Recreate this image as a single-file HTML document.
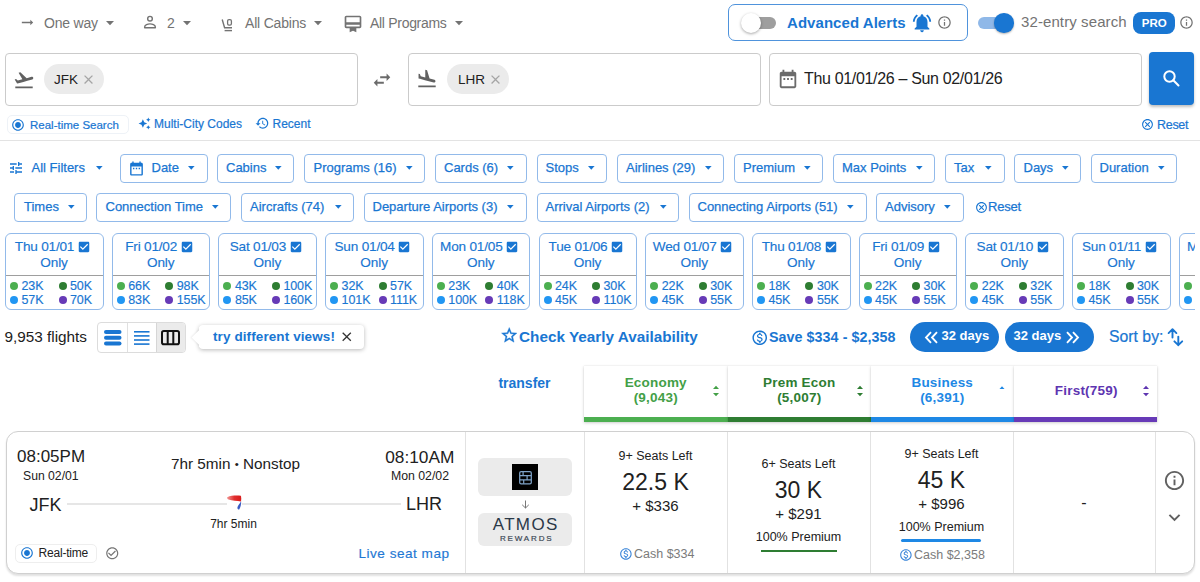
<!DOCTYPE html>
<html><head><meta charset="utf-8"><style>
html,body{margin:0;padding:0;background:#fff;width:1200px;height:582px;overflow:hidden;position:relative;}
body{font-family:"Liberation Sans",sans-serif;}
.t{position:absolute;white-space:nowrap;}
.b{position:absolute;}
.i{position:absolute;display:block;overflow:visible;}
</style></head><body>
<svg class="i" style="left:19px;top:14px;" width="17" height="17" viewBox="0 0 24 24"><path d="M16.01 11H4v2h12.01v3L20 12l-3.99-4z" fill="#737373"/></svg>
<div class="t" style="top:13.55px;font-size:14px;line-height:18px;font-weight:400;color:#737373;letter-spacing:-0.2px;left:44px;">One way</div>
<svg class="i" style="left:105.5px;top:21.2px;" width="8" height="4.2" viewBox="0 0 8 4.2"><path d="M0 0H8L4.0 4.2Z" fill="#737373"/></svg>
<svg class="i" style="left:141px;top:13px;" width="18" height="18" viewBox="0 0 24 24"><circle cx="12" cy="7.6" r="3.1" fill="none" stroke="#737373" stroke-width="1.9"/><path d="M4.9 19.6v-1.1c0-2.6 4.2-4 7.1-4s7.1 1.4 7.1 4v1.1z" fill="none" stroke="#737373" stroke-width="1.9" stroke-linejoin="round"/></svg>
<div class="t" style="top:13.55px;font-size:14px;line-height:18px;font-weight:400;color:#737373;left:167px;">2</div>
<svg class="i" style="left:183px;top:21.2px;" width="8" height="4.2" viewBox="0 0 8 4.2"><path d="M0 0H8L4.0 4.2Z" fill="#737373"/></svg>
<svg class="i" style="left:221px;top:18px;" width="13" height="14" viewBox="0 0 13 14"><path d="M1.2 1.5 L3.6 9.8 H11" fill="none" stroke="#737373" stroke-width="1.4"/><path d="M3.6 12.6H11" stroke="#737373" stroke-width="1.4"/><rect x="6.6" y="1.6" width="3.8" height="5.6" rx="1.4" fill="none" stroke="#737373" stroke-width="1.3"/></svg>
<div class="t" style="top:13.55px;font-size:14px;line-height:18px;font-weight:400;color:#737373;letter-spacing:-0.2px;left:245px;">All Cabins</div>
<svg class="i" style="left:314px;top:21.2px;" width="8" height="4.2" viewBox="0 0 8 4.2"><path d="M0 0H8L4.0 4.2Z" fill="#737373"/></svg>
<svg class="i" style="left:343px;top:13.5px;" width="20" height="20" viewBox="0 0 24 24"><path d="M20 2H4c-1.11 0-2 .89-2 2v11c0 1.11.89 2 2 2h4v5l4-2 4 2v-5h4c1.11 0 2-.89 2-2V4c0-1.11-.89-2-2-2zm0 13H4v-2h16v2zm0-5H4V4h16v6z" fill="#737373"/></svg>
<div class="t" style="top:13.55px;font-size:14px;line-height:18px;font-weight:400;color:#737373;letter-spacing:-0.3px;left:370px;">All Programs</div>
<svg class="i" style="left:454.5px;top:21.2px;" width="8" height="4.2" viewBox="0 0 8 4.2"><path d="M0 0H8L4.0 4.2Z" fill="#737373"/></svg>
<div class="b" style="left:727.5px;top:4px;width:240px;height:37px;border:1px solid #4f93dc;border-radius:7px;box-sizing:border-box;"></div>
<div class="b" style="left:750px;top:16.5px;width:26px;height:12px;background:#9e9e9e;border-radius:6px;"></div>
<div class="b" style="left:741px;top:12.5px;width:20px;height:20px;background:#fff;border-radius:50%;box-shadow:0 1px 3px rgba(0,0,0,.35);"></div>
<div class="t" style="top:12.80px;font-size:15px;line-height:19px;font-weight:700;color:#1976d2;letter-spacing:0.05px;left:787px;">Advanced Alerts</div>
<svg class="i" style="left:910.5px;top:11.5px;" width="22" height="22" viewBox="0 0 24 24"><path d="M7.58 4.08L6.15 2.65C3.75 4.48 2.17 7.3 2.03 10.5h2c.15-2.65 1.51-4.97 3.55-6.42zm12.39 6.42h2c-.15-3.2-1.730-6.02-4.12-7.85l-1.42 1.43c2.02 1.45 3.39 3.77 3.54 6.42zM18 11c0-3.07-1.64-5.64-4.5-6.32V4c0-.83-.67-1.5-1.5-1.5s-1.5.67-1.5 1.5v.68C7.630 5.36 6 7.92 6 11v5l-2 2v1h16v-1l-2-2v-5zm-6 11c.14 0 .27-.01.4-.04.65-.14 1.18-.58 1.44-1.18.1-.24.15-.5.15-.78h-4c.01 1.1.9 2 2.01 2z" fill="#1976d2"/></svg>
<svg class="i" style="left:937px;top:15px;" width="15" height="15" viewBox="0 0 24 24"><path d="M11 7h2v2h-2zm0 4h2v6h-2zm1-9C6.48 2 2 6.48 2 12s4.48 10 10 10 10-4.48 10-10S17.52 2 12 2zm0 18c-4.41 0-8-3.59-8-8s3.59-8 8-8 8 3.59 8 8-3.59 8-8 8z" fill="#737373"/></svg>
<div class="b" style="left:978px;top:16.5px;width:23px;height:12px;background:#8fb8e8;border-radius:6px;"></div>
<div class="b" style="left:994px;top:13px;width:19.5px;height:19.5px;background:#1976d2;border-radius:50%;box-shadow:0 1px 2px rgba(0,0,0,.3);"></div>
<div class="t" style="top:12.30px;font-size:15px;line-height:19px;font-weight:400;color:#737373;letter-spacing:0.1px;left:1021px;">32-entry search</div>
<div class="b" style="left:1133px;top:11.5px;width:42px;height:22px;background:#1976d2;border-radius:8px;"></div>
<div class="t" style="top:16.02px;font-size:11.5px;line-height:14px;font-weight:700;color:#fff;left:1133.3px;width:42px;text-align:center;">PRO</div>
<svg class="i" style="left:1178.5px;top:15px;" width="15" height="15" viewBox="0 0 24 24"><path d="M11 7h2v2h-2zm0 4h2v6h-2zm1-9C6.48 2 2 6.48 2 12s4.48 10 10 10 10-4.48 10-10S17.52 2 12 2zm0 18c-4.41 0-8-3.59-8-8s3.59-8 8-8 8 3.59 8 8-3.59 8-8 8z" fill="#737373"/></svg>
<div class="b" style="left:5px;top:53px;width:352.5px;height:53px;border:1px solid #cbcbcb;border-radius:4px;box-sizing:border-box;"></div>
<svg class="i" style="left:13px;top:68.5px;" width="22" height="22" viewBox="0 0 24 24"><path d="M2.5 19h19v2h-19zm19.57-9.36c-.21-.8-1.04-1.28-1.84-1.06L14.92 10l-6.9-6.43-1.93.51 4.14 7.17-4.97 1.33-1.97-1.54-1.45.39 1.82 3.16.77 1.33 1.6-.43 5.31-1.42 4.35-1.16L21 11.49c.81-.23 1.28-1.05 1.070-1.85z" fill="#616161"/></svg>
<div class="b" style="left:44px;top:64.3px;width:60px;height:30px;background:#ebebeb;border-radius:15px;"></div>
<div class="t" style="top:70.62px;font-size:13.5px;line-height:17px;font-weight:400;color:#212121;left:54px;">JFK</div>
<svg class="i" style="left:81px;top:71.5px;" width="15" height="15" viewBox="0 0 24 24"><path d="M19 6.41L17.59 5 12 10.59 6.41 5 5 6.41 10.59 12 5 17.59 6.41 19 12 13.41 17.59 19 19 17.59 13.41 12z" fill="#a5a5a5"/></svg>
<svg class="i" style="left:371px;top:68.5px;" width="22" height="22" viewBox="0 0 24 24"><path d="M6.99 11L3 15l3.99 4v-3H14v-2H6.99v-3zM21 9l-3.99-4v3H10v2h7.01v3L21 9z" fill="#6b6b6b"/></svg>
<div class="b" style="left:408px;top:53px;width:353px;height:53px;border:1px solid #cbcbcb;border-radius:4px;box-sizing:border-box;"></div>
<svg class="i" style="left:416px;top:68px;" width="22" height="22" viewBox="0 0 24 24"><path d="M2.5 19h19v2h-19zm7.18-5.73l4.35 1.16 5.31 1.42c.8.21 1.62-.26 1.84-1.06.21-.8-.26-1.62-1.06-1.84l-5.31-1.42-2.76-9.02L10.12 2v8.28L5.15 8.95l-.93-2.32-1.45-.39v5.17l1.6.43 5.31 1.43z" fill="#616161"/></svg>
<div class="b" style="left:447px;top:64.3px;width:62px;height:30px;background:#ebebeb;border-radius:15px;"></div>
<div class="t" style="top:70.62px;font-size:13.5px;line-height:17px;font-weight:400;color:#212121;left:458px;">LHR</div>
<svg class="i" style="left:487.5px;top:71.5px;" width="15" height="15" viewBox="0 0 24 24"><path d="M19 6.41L17.59 5 12 10.59 6.41 5 5 6.41 10.59 12 5 17.59 6.41 19 12 13.41 17.59 19 19 17.59 13.41 12z" fill="#a5a5a5"/></svg>
<div class="b" style="left:768.5px;top:53px;width:373.5px;height:53px;border:1px solid #cbcbcb;border-radius:4px;box-sizing:border-box;"></div>
<svg class="i" style="left:777px;top:68px;" width="22" height="22" viewBox="0 0 24 24"><path d="M9 11H7v2h2v-2zm4 0h-2v2h2v-2zm4 0h-2v2h2v-2zm2-7h-1V2h-2v2H8V2H6v2H5c-1.11 0-1.99.9-1.99 2L3 20c0 1.1.89 2 2 2h14c1.1 0 2-.9 2-2V6c0-1.1-.9-2-2-2zm0 16H5V9h14v11z" fill="#6b6b6b"/></svg>
<div class="t" style="top:69.46px;font-size:16px;line-height:20px;font-weight:400;color:#212121;letter-spacing:-0.33px;left:804px;">Thu 01/01/26 – Sun 02/01/26</div>
<div class="b" style="left:1149px;top:52px;width:45px;height:53px;background:#1976d2;border-radius:4px;box-shadow:0 2px 3px rgba(0,0,0,.25);"></div>
<svg class="i" style="left:1162px;top:69px;" width="19" height="19" viewBox="0 0 19 19"><circle cx="7.5" cy="7.5" r="5.2" fill="none" stroke="#fff" stroke-width="2"/><path d="M11.3 11.3L16.5 16.5" stroke="#fff" stroke-width="2" stroke-linecap="round"/></svg>
<div class="b" style="left:6.5px;top:115px;width:122px;height:19px;border:1px solid #eef2f7;border-radius:5px;box-sizing:border-box;"></div>
<svg class="i" style="left:11px;top:117.5px;" width="14" height="14" viewBox="0 0 24 24"><path d="M12 7c-2.76 0-5 2.24-5 5s2.24 5 5 5 5-2.24 5-5-2.24-5-5-5zm0-5C6.48 2 2 6.48 2 12s4.48 10 10 10 10-4.48 10-10S17.52 2 12 2zm0 18c-4.42 0-8-3.58-8-8s3.58-8 8-8 8 3.58 8 8-3.58 8-8 8z" fill="#1976d2"/></svg>
<div class="t" style="top:117.52px;font-size:11.5px;line-height:14px;font-weight:400;color:#1976d2;left:30px;-webkit-text-stroke:0.2px #1976d2;">Real-time Search</div>
<svg class="i" style="left:138px;top:117px;" width="13" height="13" viewBox="0 0 24 24"><path d="M19 9l1.25-2.75L23 5l-2.75-1.25L19 1l-1.25 2.75L15 5l2.75 1.25L19 9zm-7.5.5L9 4 6.5 9.5 1 12l5.5 2.5L9 20l2.5-5.5L17 12l-5.5-2.5zM19 15l-1.25 2.75L15 19l2.75 1.25L19 23l1.25-2.75L23 19l-2.75-1.25L19 15z" fill="#1976d2"/></svg>
<div class="t" style="top:117.04px;font-size:12px;line-height:15px;font-weight:400;color:#1976d2;left:154px;-webkit-text-stroke:0.2px #1976d2;">Multi-City Codes</div>
<svg class="i" style="left:254.5px;top:116px;" width="14.5" height="14.5" viewBox="0 0 24 24"><path d="M13 3c-4.97 0-9 4.03-9 9H1l3.89 3.89.07.14L9 12H6c0-3.87 3.13-7 7-7s7 3.13 7 7-3.130 7-7 7c-1.93 0-3.68-.79-4.94-2.06l-1.42 1.42C8.27 19.99 10.51 21 13 21c4.97 0 9-4.03 9-9s-4.03-9-9-9zm-1 5v5l4.28 2.54.72-1.21-3.5-2.08V8H12z" fill="#1976d2"/></svg>
<div class="t" style="top:117.04px;font-size:12px;line-height:15px;font-weight:400;color:#1976d2;left:272.5px;-webkit-text-stroke:0.2px #1976d2;">Recent</div>
<svg class="i" style="left:1141px;top:118px;" width="13" height="13" viewBox="0 0 24 24"><path d="M12 2C6.47 2 2 6.47 2 12s4.47 10 10 10 10-4.47 10-10S17.53 2 12 2zm0 18c-4.41 0-8-3.59-8-8s3.59-8 8-8 8 3.59 8 8-3.59 8-8 8zm3.59-13L12 10.59 8.41 7 7 8.41 10.59 12 7 15.59 8.41 17 12 13.41 15.59 17 17 15.59 13.41 12 17 8.41z" fill="#1976d2"/></svg>
<div class="t" style="top:116.67px;font-size:12.5px;line-height:16px;font-weight:400;color:#1976d2;letter-spacing:-0.3px;left:1157px;-webkit-text-stroke:0.2px #1976d2;">Reset</div>
<div class="b" style="left:0px;top:139.5px;width:1200px;height:1.5px;background:#e3e3e3;"></div>
<svg class="i" style="left:8px;top:160px;" width="16" height="16" viewBox="0 0 24 24"><path d="M3 17v2h6v-2H3zM3 5v2h10V5H3zm10 16v-2h8v-2h-8v-2h-2v6h2zM7 9v2H3v2h4v2h2V9H7zm14 4v-2H11v2h10zm-6-4h2V7h4V5h-4V3h-2v6z" fill="#1976d2"/></svg>
<div class="t" style="top:159.50px;font-size:13px;line-height:16px;font-weight:400;color:#1976d2;left:31.5px;-webkit-text-stroke:0.25px #1976d2;">All Filters</div>
<svg class="i" style="left:96px;top:166.2px;" width="6.6" height="3.8" viewBox="0 0 6.6 3.8"><path d="M0 0H6.6L3.3 3.8Z" fill="#1976d2"/></svg>
<div class="b" style="left:120px;top:154px;width:88px;height:29px;border:1px solid #92baea;border-radius:4px;box-sizing:border-box;"></div>
<div class="t" style="top:159.50px;font-size:13px;line-height:16px;font-weight:400;color:#1976d2;left:151.5px;-webkit-text-stroke:0.25px #1976d2;">Date</div>
<svg class="i" style="left:188px;top:166.2px;" width="6.6" height="3.8" viewBox="0 0 6.6 3.8"><path d="M0 0H6.6L3.3 3.8Z" fill="#1976d2"/></svg>
<div class="b" style="left:217px;top:154px;width:77px;height:29px;border:1px solid #92baea;border-radius:4px;box-sizing:border-box;"></div>
<div class="t" style="top:159.50px;font-size:13px;line-height:16px;font-weight:400;color:#1976d2;left:226px;-webkit-text-stroke:0.25px #1976d2;">Cabins</div>
<svg class="i" style="left:275.3px;top:166.2px;" width="6.6" height="3.8" viewBox="0 0 6.6 3.8"><path d="M0 0H6.6L3.3 3.8Z" fill="#1976d2"/></svg>
<div class="b" style="left:304px;top:154px;width:121px;height:29px;border:1px solid #92baea;border-radius:4px;box-sizing:border-box;"></div>
<div class="t" style="top:159.50px;font-size:13px;line-height:16px;font-weight:400;color:#1976d2;left:313.5px;-webkit-text-stroke:0.25px #1976d2;">Programs (16)</div>
<svg class="i" style="left:405.5px;top:166.2px;" width="6.6" height="3.8" viewBox="0 0 6.6 3.8"><path d="M0 0H6.6L3.3 3.8Z" fill="#1976d2"/></svg>
<div class="b" style="left:434.5px;top:154px;width:92.0px;height:29px;border:1px solid #92baea;border-radius:4px;box-sizing:border-box;"></div>
<div class="t" style="top:159.50px;font-size:13px;line-height:16px;font-weight:400;color:#1976d2;left:444px;-webkit-text-stroke:0.25px #1976d2;">Cards (6)</div>
<svg class="i" style="left:507.0px;top:166.2px;" width="6.6" height="3.8" viewBox="0 0 6.6 3.8"><path d="M0 0H6.6L3.3 3.8Z" fill="#1976d2"/></svg>
<div class="b" style="left:536.5px;top:154px;width:70.5px;height:29px;border:1px solid #92baea;border-radius:4px;box-sizing:border-box;"></div>
<div class="t" style="top:159.50px;font-size:13px;line-height:16px;font-weight:400;color:#1976d2;left:545.5px;-webkit-text-stroke:0.25px #1976d2;">Stops</div>
<svg class="i" style="left:587.5px;top:166.2px;" width="6.6" height="3.8" viewBox="0 0 6.6 3.8"><path d="M0 0H6.6L3.3 3.8Z" fill="#1976d2"/></svg>
<div class="b" style="left:617px;top:154px;width:107px;height:29px;border:1px solid #92baea;border-radius:4px;box-sizing:border-box;"></div>
<div class="t" style="top:159.50px;font-size:13px;line-height:16px;font-weight:400;color:#1976d2;left:626px;-webkit-text-stroke:0.25px #1976d2;">Airlines (29)</div>
<svg class="i" style="left:704.5px;top:166.2px;" width="6.6" height="3.8" viewBox="0 0 6.6 3.8"><path d="M0 0H6.6L3.3 3.8Z" fill="#1976d2"/></svg>
<div class="b" style="left:734px;top:154px;width:89px;height:29px;border:1px solid #92baea;border-radius:4px;box-sizing:border-box;"></div>
<div class="t" style="top:159.50px;font-size:13px;line-height:16px;font-weight:400;color:#1976d2;left:743px;-webkit-text-stroke:0.25px #1976d2;">Premium</div>
<svg class="i" style="left:803.5px;top:166.2px;" width="6.6" height="3.8" viewBox="0 0 6.6 3.8"><path d="M0 0H6.6L3.3 3.8Z" fill="#1976d2"/></svg>
<div class="b" style="left:833px;top:154px;width:102px;height:29px;border:1px solid #92baea;border-radius:4px;box-sizing:border-box;"></div>
<div class="t" style="top:159.50px;font-size:13px;line-height:16px;font-weight:400;color:#1976d2;left:842px;-webkit-text-stroke:0.25px #1976d2;">Max Points</div>
<svg class="i" style="left:915.5px;top:166.2px;" width="6.6" height="3.8" viewBox="0 0 6.6 3.8"><path d="M0 0H6.6L3.3 3.8Z" fill="#1976d2"/></svg>
<div class="b" style="left:944.5px;top:154px;width:60.0px;height:29px;border:1px solid #92baea;border-radius:4px;box-sizing:border-box;"></div>
<div class="t" style="top:159.50px;font-size:13px;line-height:16px;font-weight:400;color:#1976d2;left:954px;-webkit-text-stroke:0.25px #1976d2;">Tax</div>
<svg class="i" style="left:985.0px;top:166.2px;" width="6.6" height="3.8" viewBox="0 0 6.6 3.8"><path d="M0 0H6.6L3.3 3.8Z" fill="#1976d2"/></svg>
<div class="b" style="left:1014px;top:154px;width:67px;height:29px;border:1px solid #92baea;border-radius:4px;box-sizing:border-box;"></div>
<div class="t" style="top:159.50px;font-size:13px;line-height:16px;font-weight:400;color:#1976d2;left:1023.5px;-webkit-text-stroke:0.25px #1976d2;">Days</div>
<svg class="i" style="left:1061.5px;top:166.2px;" width="6.6" height="3.8" viewBox="0 0 6.6 3.8"><path d="M0 0H6.6L3.3 3.8Z" fill="#1976d2"/></svg>
<div class="b" style="left:1090.5px;top:154px;width:86.5px;height:29px;border:1px solid #92baea;border-radius:4px;box-sizing:border-box;"></div>
<div class="t" style="top:159.50px;font-size:13px;line-height:16px;font-weight:400;color:#1976d2;left:1099.5px;-webkit-text-stroke:0.25px #1976d2;">Duration</div>
<svg class="i" style="left:1157.5px;top:166.2px;" width="6.6" height="3.8" viewBox="0 0 6.6 3.8"><path d="M0 0H6.6L3.3 3.8Z" fill="#1976d2"/></svg>
<svg class="i" style="left:127.5px;top:159.5px;" width="17" height="17" viewBox="0 0 24 24"><path d="M9 11H7v2h2v-2zm4 0h-2v2h2v-2zm4 0h-2v2h2v-2zm2-7h-1V2h-2v2H8V2H6v2H5c-1.11 0-1.99.9-1.99 2L3 20c0 1.1.89 2 2 2h14c1.1 0 2-.9 2-2V6c0-1.1-.9-2-2-2zm0 16H5V9h14v11z" fill="#1976d2"/></svg>
<div class="b" style="left:14px;top:193px;width:73px;height:29px;border:1px solid #92baea;border-radius:4px;box-sizing:border-box;"></div>
<div class="t" style="top:198.50px;font-size:13px;line-height:16px;font-weight:400;color:#1976d2;left:24px;-webkit-text-stroke:0.25px #1976d2;">Times</div>
<svg class="i" style="left:67.5px;top:205.2px;" width="6.6" height="3.8" viewBox="0 0 6.6 3.8"><path d="M0 0H6.6L3.3 3.8Z" fill="#1976d2"/></svg>
<div class="b" style="left:96px;top:193px;width:135px;height:29px;border:1px solid #92baea;border-radius:4px;box-sizing:border-box;"></div>
<div class="t" style="top:198.50px;font-size:13px;line-height:16px;font-weight:400;color:#1976d2;left:105.5px;-webkit-text-stroke:0.25px #1976d2;">Connection Time</div>
<svg class="i" style="left:211.5px;top:205.2px;" width="6.6" height="3.8" viewBox="0 0 6.6 3.8"><path d="M0 0H6.6L3.3 3.8Z" fill="#1976d2"/></svg>
<div class="b" style="left:241px;top:193px;width:113px;height:29px;border:1px solid #92baea;border-radius:4px;box-sizing:border-box;"></div>
<div class="t" style="top:198.50px;font-size:13px;line-height:16px;font-weight:400;color:#1976d2;left:250px;-webkit-text-stroke:0.25px #1976d2;">Aircrafts (74)</div>
<svg class="i" style="left:334.5px;top:205.2px;" width="6.6" height="3.8" viewBox="0 0 6.6 3.8"><path d="M0 0H6.6L3.3 3.8Z" fill="#1976d2"/></svg>
<div class="b" style="left:363.5px;top:193px;width:163.0px;height:29px;border:1px solid #92baea;border-radius:4px;box-sizing:border-box;"></div>
<div class="t" style="top:198.50px;font-size:13px;line-height:16px;font-weight:400;color:#1976d2;left:372.5px;-webkit-text-stroke:0.25px #1976d2;">Departure Airports (3)</div>
<svg class="i" style="left:507.0px;top:205.2px;" width="6.6" height="3.8" viewBox="0 0 6.6 3.8"><path d="M0 0H6.6L3.3 3.8Z" fill="#1976d2"/></svg>
<div class="b" style="left:536.5px;top:193px;width:142.5px;height:29px;border:1px solid #92baea;border-radius:4px;box-sizing:border-box;"></div>
<div class="t" style="top:198.50px;font-size:13px;line-height:16px;font-weight:400;color:#1976d2;left:545.5px;-webkit-text-stroke:0.25px #1976d2;">Arrival Airports (2)</div>
<svg class="i" style="left:659.5px;top:205.2px;" width="6.6" height="3.8" viewBox="0 0 6.6 3.8"><path d="M0 0H6.6L3.3 3.8Z" fill="#1976d2"/></svg>
<div class="b" style="left:688.5px;top:193px;width:178.0px;height:29px;border:1px solid #92baea;border-radius:4px;box-sizing:border-box;"></div>
<div class="t" style="top:198.50px;font-size:13px;line-height:16px;font-weight:400;color:#1976d2;left:697.5px;-webkit-text-stroke:0.25px #1976d2;">Connecting Airports (51)</div>
<svg class="i" style="left:847.0px;top:205.2px;" width="6.6" height="3.8" viewBox="0 0 6.6 3.8"><path d="M0 0H6.6L3.3 3.8Z" fill="#1976d2"/></svg>
<div class="b" style="left:876px;top:193px;width:87.5px;height:29px;border:1px solid #92baea;border-radius:4px;box-sizing:border-box;"></div>
<div class="t" style="top:198.50px;font-size:13px;line-height:16px;font-weight:400;color:#1976d2;left:885px;-webkit-text-stroke:0.25px #1976d2;">Advisory</div>
<svg class="i" style="left:944.0px;top:205.2px;" width="6.6" height="3.8" viewBox="0 0 6.6 3.8"><path d="M0 0H6.6L3.3 3.8Z" fill="#1976d2"/></svg>
<svg class="i" style="left:974.5px;top:200.5px;" width="13" height="13" viewBox="0 0 24 24"><path d="M12 2C6.47 2 2 6.47 2 12s4.47 10 10 10 10-4.47 10-10S17.53 2 12 2zm0 18c-4.41 0-8-3.59-8-8s3.59-8 8-8 8 3.59 8 8-3.59 8-8 8zm3.59-13L12 10.59 8.41 7 7 8.41 10.59 12 7 15.59 8.41 17 12 13.41 15.59 17 17 15.59 13.41 12 17 8.41z" fill="#1976d2"/></svg>
<div class="t" style="top:198.50px;font-size:13px;line-height:16px;font-weight:400;color:#1976d2;letter-spacing:-0.2px;left:988px;-webkit-text-stroke:0.25px #1976d2;">Reset</div>
<div style="position:absolute;left:0;top:0;width:1194.5px;height:340px;overflow:hidden;">
<div class="b" style="left:5.0px;top:233.2px;width:98.7px;height:77.3px;border:1px solid #92baea;border-radius:6px;box-sizing:border-box;"></div>
<div class="b" style="left:6.0px;top:275px;width:96.7px;height:1px;background:#9e9e9e;"></div>
<div class="t" style="left:3.25px;width:99px;top:239.29px;line-height:16px;font-size:13.6px;letter-spacing:-0.2px;color:#1976d2;text-align:center;-webkit-text-stroke:0.15px #1976d2;">Thu 01/01<svg width="14" height="14" viewBox="0 0 24 24" style="display:inline-block;vertical-align:-3px;margin-left:2.5px"><path d="M19 3H5c-1.11 0-2 .9-2 2v14c0 1.1.89 2 2 2h14c1.11 0 2-.9 2-2V5c0-1.1-.89-2-2-2zm-9 14l-5-5 1.41-1.41L10 14.17l7.59-7.59L19 8l-9 9z" fill="#1976d2"/></svg></div>
<div class="t" style="top:254.09px;font-size:13.6px;line-height:17px;font-weight:400;color:#1976d2;letter-spacing:-0.1px;left:5.0px;width:98px;text-align:center;-webkit-text-stroke:0.15px #1976d2;">Only</div>
<div class="b" style="left:10.0px;top:281.8px;width:8px;height:8px;background:#4caf50;border-radius:50%;"></div>
<div class="t" style="top:278.17px;font-size:12.5px;line-height:16px;font-weight:400;color:#1976d2;letter-spacing:-0.1px;left:21.5px;-webkit-text-stroke:0.15px #1976d2;">23K</div>
<div class="b" style="left:58.5px;top:281.8px;width:8px;height:8px;background:#2e7d32;border-radius:50%;"></div>
<div class="t" style="top:278.17px;font-size:12.5px;line-height:16px;font-weight:400;color:#1976d2;letter-spacing:-0.1px;left:70.0px;-webkit-text-stroke:0.15px #1976d2;">50K</div>
<div class="b" style="left:10.0px;top:296.1px;width:8px;height:8px;background:#2196f3;border-radius:50%;"></div>
<div class="t" style="top:292.47px;font-size:12.5px;line-height:16px;font-weight:400;color:#1976d2;letter-spacing:-0.1px;left:21.5px;-webkit-text-stroke:0.15px #1976d2;">57K</div>
<div class="b" style="left:58.5px;top:296.1px;width:8px;height:8px;background:#673ab7;border-radius:50%;"></div>
<div class="t" style="top:292.47px;font-size:12.5px;line-height:16px;font-weight:400;color:#1976d2;letter-spacing:-0.1px;left:70.0px;-webkit-text-stroke:0.15px #1976d2;">70K</div>
<div class="b" style="left:111.7px;top:233.2px;width:98.7px;height:77.3px;border:1px solid #92baea;border-radius:6px;box-sizing:border-box;"></div>
<div class="b" style="left:112.7px;top:275px;width:96.7px;height:1px;background:#9e9e9e;"></div>
<div class="t" style="left:109.95px;width:99px;top:239.29px;line-height:16px;font-size:13.6px;letter-spacing:-0.2px;color:#1976d2;text-align:center;-webkit-text-stroke:0.15px #1976d2;">Fri 01/02<svg width="14" height="14" viewBox="0 0 24 24" style="display:inline-block;vertical-align:-3px;margin-left:2.5px"><path d="M19 3H5c-1.11 0-2 .9-2 2v14c0 1.1.89 2 2 2h14c1.11 0 2-.9 2-2V5c0-1.1-.89-2-2-2zm-9 14l-5-5 1.41-1.41L10 14.17l7.59-7.59L19 8l-9 9z" fill="#1976d2"/></svg></div>
<div class="t" style="top:254.09px;font-size:13.6px;line-height:17px;font-weight:400;color:#1976d2;letter-spacing:-0.1px;left:111.69999999999999px;width:98px;text-align:center;-webkit-text-stroke:0.15px #1976d2;">Only</div>
<div class="b" style="left:116.7px;top:281.8px;width:8px;height:8px;background:#4caf50;border-radius:50%;"></div>
<div class="t" style="top:278.17px;font-size:12.5px;line-height:16px;font-weight:400;color:#1976d2;letter-spacing:-0.1px;left:128.2px;-webkit-text-stroke:0.15px #1976d2;">66K</div>
<div class="b" style="left:165.2px;top:281.8px;width:8px;height:8px;background:#2e7d32;border-radius:50%;"></div>
<div class="t" style="top:278.17px;font-size:12.5px;line-height:16px;font-weight:400;color:#1976d2;letter-spacing:-0.1px;left:176.7px;-webkit-text-stroke:0.15px #1976d2;">98K</div>
<div class="b" style="left:116.7px;top:296.1px;width:8px;height:8px;background:#2196f3;border-radius:50%;"></div>
<div class="t" style="top:292.47px;font-size:12.5px;line-height:16px;font-weight:400;color:#1976d2;letter-spacing:-0.1px;left:128.2px;-webkit-text-stroke:0.15px #1976d2;">83K</div>
<div class="b" style="left:165.2px;top:296.1px;width:8px;height:8px;background:#673ab7;border-radius:50%;"></div>
<div class="t" style="top:292.47px;font-size:12.5px;line-height:16px;font-weight:400;color:#1976d2;letter-spacing:-0.1px;left:176.7px;-webkit-text-stroke:0.15px #1976d2;">155K</div>
<div class="b" style="left:218.4px;top:233.2px;width:98.7px;height:77.3px;border:1px solid #92baea;border-radius:6px;box-sizing:border-box;"></div>
<div class="b" style="left:219.4px;top:275px;width:96.7px;height:1px;background:#9e9e9e;"></div>
<div class="t" style="left:216.65px;width:99px;top:239.29px;line-height:16px;font-size:13.6px;letter-spacing:-0.2px;color:#1976d2;text-align:center;-webkit-text-stroke:0.15px #1976d2;">Sat 01/03<svg width="14" height="14" viewBox="0 0 24 24" style="display:inline-block;vertical-align:-3px;margin-left:2.5px"><path d="M19 3H5c-1.11 0-2 .9-2 2v14c0 1.1.89 2 2 2h14c1.11 0 2-.9 2-2V5c0-1.1-.89-2-2-2zm-9 14l-5-5 1.41-1.41L10 14.17l7.59-7.59L19 8l-9 9z" fill="#1976d2"/></svg></div>
<div class="t" style="top:254.09px;font-size:13.6px;line-height:17px;font-weight:400;color:#1976d2;letter-spacing:-0.1px;left:218.39999999999998px;width:98px;text-align:center;-webkit-text-stroke:0.15px #1976d2;">Only</div>
<div class="b" style="left:223.4px;top:281.8px;width:8px;height:8px;background:#4caf50;border-radius:50%;"></div>
<div class="t" style="top:278.17px;font-size:12.5px;line-height:16px;font-weight:400;color:#1976d2;letter-spacing:-0.1px;left:234.9px;-webkit-text-stroke:0.15px #1976d2;">43K</div>
<div class="b" style="left:271.9px;top:281.8px;width:8px;height:8px;background:#2e7d32;border-radius:50%;"></div>
<div class="t" style="top:278.17px;font-size:12.5px;line-height:16px;font-weight:400;color:#1976d2;letter-spacing:-0.1px;left:283.4px;-webkit-text-stroke:0.15px #1976d2;">100K</div>
<div class="b" style="left:223.4px;top:296.1px;width:8px;height:8px;background:#2196f3;border-radius:50%;"></div>
<div class="t" style="top:292.47px;font-size:12.5px;line-height:16px;font-weight:400;color:#1976d2;letter-spacing:-0.1px;left:234.9px;-webkit-text-stroke:0.15px #1976d2;">85K</div>
<div class="b" style="left:271.9px;top:296.1px;width:8px;height:8px;background:#673ab7;border-radius:50%;"></div>
<div class="t" style="top:292.47px;font-size:12.5px;line-height:16px;font-weight:400;color:#1976d2;letter-spacing:-0.1px;left:283.4px;-webkit-text-stroke:0.15px #1976d2;">160K</div>
<div class="b" style="left:325.1px;top:233.2px;width:98.7px;height:77.3px;border:1px solid #92baea;border-radius:6px;box-sizing:border-box;"></div>
<div class="b" style="left:326.1px;top:275px;width:96.7px;height:1px;background:#9e9e9e;"></div>
<div class="t" style="left:323.35px;width:99px;top:239.29px;line-height:16px;font-size:13.6px;letter-spacing:-0.2px;color:#1976d2;text-align:center;-webkit-text-stroke:0.15px #1976d2;">Sun 01/04<svg width="14" height="14" viewBox="0 0 24 24" style="display:inline-block;vertical-align:-3px;margin-left:2.5px"><path d="M19 3H5c-1.11 0-2 .9-2 2v14c0 1.1.89 2 2 2h14c1.11 0 2-.9 2-2V5c0-1.1-.89-2-2-2zm-9 14l-5-5 1.41-1.41L10 14.17l7.59-7.59L19 8l-9 9z" fill="#1976d2"/></svg></div>
<div class="t" style="top:254.09px;font-size:13.6px;line-height:17px;font-weight:400;color:#1976d2;letter-spacing:-0.1px;left:325.1px;width:98px;text-align:center;-webkit-text-stroke:0.15px #1976d2;">Only</div>
<div class="b" style="left:330.1px;top:281.8px;width:8px;height:8px;background:#4caf50;border-radius:50%;"></div>
<div class="t" style="top:278.17px;font-size:12.5px;line-height:16px;font-weight:400;color:#1976d2;letter-spacing:-0.1px;left:341.6px;-webkit-text-stroke:0.15px #1976d2;">32K</div>
<div class="b" style="left:378.6px;top:281.8px;width:8px;height:8px;background:#2e7d32;border-radius:50%;"></div>
<div class="t" style="top:278.17px;font-size:12.5px;line-height:16px;font-weight:400;color:#1976d2;letter-spacing:-0.1px;left:390.1px;-webkit-text-stroke:0.15px #1976d2;">57K</div>
<div class="b" style="left:330.1px;top:296.1px;width:8px;height:8px;background:#2196f3;border-radius:50%;"></div>
<div class="t" style="top:292.47px;font-size:12.5px;line-height:16px;font-weight:400;color:#1976d2;letter-spacing:-0.1px;left:341.6px;-webkit-text-stroke:0.15px #1976d2;">101K</div>
<div class="b" style="left:378.6px;top:296.1px;width:8px;height:8px;background:#673ab7;border-radius:50%;"></div>
<div class="t" style="top:292.47px;font-size:12.5px;line-height:16px;font-weight:400;color:#1976d2;letter-spacing:-0.1px;left:390.1px;-webkit-text-stroke:0.15px #1976d2;">111K</div>
<div class="b" style="left:431.8px;top:233.2px;width:98.7px;height:77.3px;border:1px solid #92baea;border-radius:6px;box-sizing:border-box;"></div>
<div class="b" style="left:432.8px;top:275px;width:96.7px;height:1px;background:#9e9e9e;"></div>
<div class="t" style="left:430.05px;width:99px;top:239.29px;line-height:16px;font-size:13.6px;letter-spacing:-0.2px;color:#1976d2;text-align:center;-webkit-text-stroke:0.15px #1976d2;">Mon 01/05<svg width="14" height="14" viewBox="0 0 24 24" style="display:inline-block;vertical-align:-3px;margin-left:2.5px"><path d="M19 3H5c-1.11 0-2 .9-2 2v14c0 1.1.89 2 2 2h14c1.11 0 2-.9 2-2V5c0-1.1-.89-2-2-2zm-9 14l-5-5 1.41-1.41L10 14.17l7.59-7.59L19 8l-9 9z" fill="#1976d2"/></svg></div>
<div class="t" style="top:254.09px;font-size:13.6px;line-height:17px;font-weight:400;color:#1976d2;letter-spacing:-0.1px;left:431.8px;width:98px;text-align:center;-webkit-text-stroke:0.15px #1976d2;">Only</div>
<div class="b" style="left:436.8px;top:281.8px;width:8px;height:8px;background:#4caf50;border-radius:50%;"></div>
<div class="t" style="top:278.17px;font-size:12.5px;line-height:16px;font-weight:400;color:#1976d2;letter-spacing:-0.1px;left:448.3px;-webkit-text-stroke:0.15px #1976d2;">23K</div>
<div class="b" style="left:485.3px;top:281.8px;width:8px;height:8px;background:#2e7d32;border-radius:50%;"></div>
<div class="t" style="top:278.17px;font-size:12.5px;line-height:16px;font-weight:400;color:#1976d2;letter-spacing:-0.1px;left:496.8px;-webkit-text-stroke:0.15px #1976d2;">40K</div>
<div class="b" style="left:436.8px;top:296.1px;width:8px;height:8px;background:#2196f3;border-radius:50%;"></div>
<div class="t" style="top:292.47px;font-size:12.5px;line-height:16px;font-weight:400;color:#1976d2;letter-spacing:-0.1px;left:448.3px;-webkit-text-stroke:0.15px #1976d2;">100K</div>
<div class="b" style="left:485.3px;top:296.1px;width:8px;height:8px;background:#673ab7;border-radius:50%;"></div>
<div class="t" style="top:292.47px;font-size:12.5px;line-height:16px;font-weight:400;color:#1976d2;letter-spacing:-0.1px;left:496.8px;-webkit-text-stroke:0.15px #1976d2;">118K</div>
<div class="b" style="left:538.5px;top:233.2px;width:98.7px;height:77.3px;border:1px solid #92baea;border-radius:6px;box-sizing:border-box;"></div>
<div class="b" style="left:539.5px;top:275px;width:96.7px;height:1px;background:#9e9e9e;"></div>
<div class="t" style="left:536.75px;width:99px;top:239.29px;line-height:16px;font-size:13.6px;letter-spacing:-0.2px;color:#1976d2;text-align:center;-webkit-text-stroke:0.15px #1976d2;">Tue 01/06<svg width="14" height="14" viewBox="0 0 24 24" style="display:inline-block;vertical-align:-3px;margin-left:2.5px"><path d="M19 3H5c-1.11 0-2 .9-2 2v14c0 1.1.89 2 2 2h14c1.11 0 2-.9 2-2V5c0-1.1-.89-2-2-2zm-9 14l-5-5 1.41-1.41L10 14.17l7.59-7.59L19 8l-9 9z" fill="#1976d2"/></svg></div>
<div class="t" style="top:254.09px;font-size:13.6px;line-height:17px;font-weight:400;color:#1976d2;letter-spacing:-0.1px;left:538.5px;width:98px;text-align:center;-webkit-text-stroke:0.15px #1976d2;">Only</div>
<div class="b" style="left:543.5px;top:281.8px;width:8px;height:8px;background:#4caf50;border-radius:50%;"></div>
<div class="t" style="top:278.17px;font-size:12.5px;line-height:16px;font-weight:400;color:#1976d2;letter-spacing:-0.1px;left:555.0px;-webkit-text-stroke:0.15px #1976d2;">24K</div>
<div class="b" style="left:592.0px;top:281.8px;width:8px;height:8px;background:#2e7d32;border-radius:50%;"></div>
<div class="t" style="top:278.17px;font-size:12.5px;line-height:16px;font-weight:400;color:#1976d2;letter-spacing:-0.1px;left:603.5px;-webkit-text-stroke:0.15px #1976d2;">30K</div>
<div class="b" style="left:543.5px;top:296.1px;width:8px;height:8px;background:#2196f3;border-radius:50%;"></div>
<div class="t" style="top:292.47px;font-size:12.5px;line-height:16px;font-weight:400;color:#1976d2;letter-spacing:-0.1px;left:555.0px;-webkit-text-stroke:0.15px #1976d2;">45K</div>
<div class="b" style="left:592.0px;top:296.1px;width:8px;height:8px;background:#673ab7;border-radius:50%;"></div>
<div class="t" style="top:292.47px;font-size:12.5px;line-height:16px;font-weight:400;color:#1976d2;letter-spacing:-0.1px;left:603.5px;-webkit-text-stroke:0.15px #1976d2;">110K</div>
<div class="b" style="left:645.2px;top:233.2px;width:98.7px;height:77.3px;border:1px solid #92baea;border-radius:6px;box-sizing:border-box;"></div>
<div class="b" style="left:646.2px;top:275px;width:96.7px;height:1px;background:#9e9e9e;"></div>
<div class="t" style="left:643.45px;width:99px;top:239.29px;line-height:16px;font-size:13.6px;letter-spacing:-0.2px;color:#1976d2;text-align:center;-webkit-text-stroke:0.15px #1976d2;">Wed 01/07<svg width="14" height="14" viewBox="0 0 24 24" style="display:inline-block;vertical-align:-3px;margin-left:2.5px"><path d="M19 3H5c-1.11 0-2 .9-2 2v14c0 1.1.89 2 2 2h14c1.11 0 2-.9 2-2V5c0-1.1-.89-2-2-2zm-9 14l-5-5 1.41-1.41L10 14.17l7.59-7.59L19 8l-9 9z" fill="#1976d2"/></svg></div>
<div class="t" style="top:254.09px;font-size:13.6px;line-height:17px;font-weight:400;color:#1976d2;letter-spacing:-0.1px;left:645.2px;width:98px;text-align:center;-webkit-text-stroke:0.15px #1976d2;">Only</div>
<div class="b" style="left:650.2px;top:281.8px;width:8px;height:8px;background:#4caf50;border-radius:50%;"></div>
<div class="t" style="top:278.17px;font-size:12.5px;line-height:16px;font-weight:400;color:#1976d2;letter-spacing:-0.1px;left:661.7px;-webkit-text-stroke:0.15px #1976d2;">22K</div>
<div class="b" style="left:698.7px;top:281.8px;width:8px;height:8px;background:#2e7d32;border-radius:50%;"></div>
<div class="t" style="top:278.17px;font-size:12.5px;line-height:16px;font-weight:400;color:#1976d2;letter-spacing:-0.1px;left:710.2px;-webkit-text-stroke:0.15px #1976d2;">30K</div>
<div class="b" style="left:650.2px;top:296.1px;width:8px;height:8px;background:#2196f3;border-radius:50%;"></div>
<div class="t" style="top:292.47px;font-size:12.5px;line-height:16px;font-weight:400;color:#1976d2;letter-spacing:-0.1px;left:661.7px;-webkit-text-stroke:0.15px #1976d2;">45K</div>
<div class="b" style="left:698.7px;top:296.1px;width:8px;height:8px;background:#673ab7;border-radius:50%;"></div>
<div class="t" style="top:292.47px;font-size:12.5px;line-height:16px;font-weight:400;color:#1976d2;letter-spacing:-0.1px;left:710.2px;-webkit-text-stroke:0.15px #1976d2;">55K</div>
<div class="b" style="left:751.9px;top:233.2px;width:98.7px;height:77.3px;border:1px solid #92baea;border-radius:6px;box-sizing:border-box;"></div>
<div class="b" style="left:752.9px;top:275px;width:96.7px;height:1px;background:#9e9e9e;"></div>
<div class="t" style="left:750.15px;width:99px;top:239.29px;line-height:16px;font-size:13.6px;letter-spacing:-0.2px;color:#1976d2;text-align:center;-webkit-text-stroke:0.15px #1976d2;">Thu 01/08<svg width="14" height="14" viewBox="0 0 24 24" style="display:inline-block;vertical-align:-3px;margin-left:2.5px"><path d="M19 3H5c-1.11 0-2 .9-2 2v14c0 1.1.89 2 2 2h14c1.11 0 2-.9 2-2V5c0-1.1-.89-2-2-2zm-9 14l-5-5 1.41-1.41L10 14.17l7.59-7.59L19 8l-9 9z" fill="#1976d2"/></svg></div>
<div class="t" style="top:254.09px;font-size:13.6px;line-height:17px;font-weight:400;color:#1976d2;letter-spacing:-0.1px;left:751.9px;width:98px;text-align:center;-webkit-text-stroke:0.15px #1976d2;">Only</div>
<div class="b" style="left:756.9px;top:281.8px;width:8px;height:8px;background:#4caf50;border-radius:50%;"></div>
<div class="t" style="top:278.17px;font-size:12.5px;line-height:16px;font-weight:400;color:#1976d2;letter-spacing:-0.1px;left:768.4px;-webkit-text-stroke:0.15px #1976d2;">18K</div>
<div class="b" style="left:805.4px;top:281.8px;width:8px;height:8px;background:#2e7d32;border-radius:50%;"></div>
<div class="t" style="top:278.17px;font-size:12.5px;line-height:16px;font-weight:400;color:#1976d2;letter-spacing:-0.1px;left:816.9px;-webkit-text-stroke:0.15px #1976d2;">30K</div>
<div class="b" style="left:756.9px;top:296.1px;width:8px;height:8px;background:#2196f3;border-radius:50%;"></div>
<div class="t" style="top:292.47px;font-size:12.5px;line-height:16px;font-weight:400;color:#1976d2;letter-spacing:-0.1px;left:768.4px;-webkit-text-stroke:0.15px #1976d2;">45K</div>
<div class="b" style="left:805.4px;top:296.1px;width:8px;height:8px;background:#673ab7;border-radius:50%;"></div>
<div class="t" style="top:292.47px;font-size:12.5px;line-height:16px;font-weight:400;color:#1976d2;letter-spacing:-0.1px;left:816.9px;-webkit-text-stroke:0.15px #1976d2;">55K</div>
<div class="b" style="left:858.6px;top:233.2px;width:98.7px;height:77.3px;border:1px solid #92baea;border-radius:6px;box-sizing:border-box;"></div>
<div class="b" style="left:859.6px;top:275px;width:96.7px;height:1px;background:#9e9e9e;"></div>
<div class="t" style="left:856.85px;width:99px;top:239.29px;line-height:16px;font-size:13.6px;letter-spacing:-0.2px;color:#1976d2;text-align:center;-webkit-text-stroke:0.15px #1976d2;">Fri 01/09<svg width="14" height="14" viewBox="0 0 24 24" style="display:inline-block;vertical-align:-3px;margin-left:2.5px"><path d="M19 3H5c-1.11 0-2 .9-2 2v14c0 1.1.89 2 2 2h14c1.11 0 2-.9 2-2V5c0-1.1-.89-2-2-2zm-9 14l-5-5 1.41-1.41L10 14.17l7.59-7.59L19 8l-9 9z" fill="#1976d2"/></svg></div>
<div class="t" style="top:254.09px;font-size:13.6px;line-height:17px;font-weight:400;color:#1976d2;letter-spacing:-0.1px;left:858.6px;width:98px;text-align:center;-webkit-text-stroke:0.15px #1976d2;">Only</div>
<div class="b" style="left:863.6px;top:281.8px;width:8px;height:8px;background:#4caf50;border-radius:50%;"></div>
<div class="t" style="top:278.17px;font-size:12.5px;line-height:16px;font-weight:400;color:#1976d2;letter-spacing:-0.1px;left:875.1px;-webkit-text-stroke:0.15px #1976d2;">22K</div>
<div class="b" style="left:912.1px;top:281.8px;width:8px;height:8px;background:#2e7d32;border-radius:50%;"></div>
<div class="t" style="top:278.17px;font-size:12.5px;line-height:16px;font-weight:400;color:#1976d2;letter-spacing:-0.1px;left:923.6px;-webkit-text-stroke:0.15px #1976d2;">30K</div>
<div class="b" style="left:863.6px;top:296.1px;width:8px;height:8px;background:#2196f3;border-radius:50%;"></div>
<div class="t" style="top:292.47px;font-size:12.5px;line-height:16px;font-weight:400;color:#1976d2;letter-spacing:-0.1px;left:875.1px;-webkit-text-stroke:0.15px #1976d2;">45K</div>
<div class="b" style="left:912.1px;top:296.1px;width:8px;height:8px;background:#673ab7;border-radius:50%;"></div>
<div class="t" style="top:292.47px;font-size:12.5px;line-height:16px;font-weight:400;color:#1976d2;letter-spacing:-0.1px;left:923.6px;-webkit-text-stroke:0.15px #1976d2;">55K</div>
<div class="b" style="left:965.3000000000001px;top:233.2px;width:98.7px;height:77.3px;border:1px solid #92baea;border-radius:6px;box-sizing:border-box;"></div>
<div class="b" style="left:966.3000000000001px;top:275px;width:96.7px;height:1px;background:#9e9e9e;"></div>
<div class="t" style="left:963.5500000000001px;width:99px;top:239.29px;line-height:16px;font-size:13.6px;letter-spacing:-0.2px;color:#1976d2;text-align:center;-webkit-text-stroke:0.15px #1976d2;">Sat 01/10<svg width="14" height="14" viewBox="0 0 24 24" style="display:inline-block;vertical-align:-3px;margin-left:2.5px"><path d="M19 3H5c-1.11 0-2 .9-2 2v14c0 1.1.89 2 2 2h14c1.11 0 2-.9 2-2V5c0-1.1-.89-2-2-2zm-9 14l-5-5 1.41-1.41L10 14.17l7.59-7.59L19 8l-9 9z" fill="#1976d2"/></svg></div>
<div class="t" style="top:254.09px;font-size:13.6px;line-height:17px;font-weight:400;color:#1976d2;letter-spacing:-0.1px;left:965.3000000000001px;width:98px;text-align:center;-webkit-text-stroke:0.15px #1976d2;">Only</div>
<div class="b" style="left:970.3000000000001px;top:281.8px;width:8px;height:8px;background:#4caf50;border-radius:50%;"></div>
<div class="t" style="top:278.17px;font-size:12.5px;line-height:16px;font-weight:400;color:#1976d2;letter-spacing:-0.1px;left:981.8000000000001px;-webkit-text-stroke:0.15px #1976d2;">22K</div>
<div class="b" style="left:1018.8000000000001px;top:281.8px;width:8px;height:8px;background:#2e7d32;border-radius:50%;"></div>
<div class="t" style="top:278.17px;font-size:12.5px;line-height:16px;font-weight:400;color:#1976d2;letter-spacing:-0.1px;left:1030.3000000000002px;-webkit-text-stroke:0.15px #1976d2;">32K</div>
<div class="b" style="left:970.3000000000001px;top:296.1px;width:8px;height:8px;background:#2196f3;border-radius:50%;"></div>
<div class="t" style="top:292.47px;font-size:12.5px;line-height:16px;font-weight:400;color:#1976d2;letter-spacing:-0.1px;left:981.8000000000001px;-webkit-text-stroke:0.15px #1976d2;">45K</div>
<div class="b" style="left:1018.8000000000001px;top:296.1px;width:8px;height:8px;background:#673ab7;border-radius:50%;"></div>
<div class="t" style="top:292.47px;font-size:12.5px;line-height:16px;font-weight:400;color:#1976d2;letter-spacing:-0.1px;left:1030.3000000000002px;-webkit-text-stroke:0.15px #1976d2;">55K</div>
<div class="b" style="left:1072.0px;top:233.2px;width:98.7px;height:77.3px;border:1px solid #92baea;border-radius:6px;box-sizing:border-box;"></div>
<div class="b" style="left:1073.0px;top:275px;width:96.7px;height:1px;background:#9e9e9e;"></div>
<div class="t" style="left:1070.25px;width:99px;top:239.29px;line-height:16px;font-size:13.6px;letter-spacing:-0.2px;color:#1976d2;text-align:center;-webkit-text-stroke:0.15px #1976d2;">Sun 01/11<svg width="14" height="14" viewBox="0 0 24 24" style="display:inline-block;vertical-align:-3px;margin-left:2.5px"><path d="M19 3H5c-1.11 0-2 .9-2 2v14c0 1.1.89 2 2 2h14c1.11 0 2-.9 2-2V5c0-1.1-.89-2-2-2zm-9 14l-5-5 1.41-1.41L10 14.17l7.59-7.59L19 8l-9 9z" fill="#1976d2"/></svg></div>
<div class="t" style="top:254.09px;font-size:13.6px;line-height:17px;font-weight:400;color:#1976d2;letter-spacing:-0.1px;left:1072.0px;width:98px;text-align:center;-webkit-text-stroke:0.15px #1976d2;">Only</div>
<div class="b" style="left:1077.0px;top:281.8px;width:8px;height:8px;background:#4caf50;border-radius:50%;"></div>
<div class="t" style="top:278.17px;font-size:12.5px;line-height:16px;font-weight:400;color:#1976d2;letter-spacing:-0.1px;left:1088.5px;-webkit-text-stroke:0.15px #1976d2;">18K</div>
<div class="b" style="left:1125.5px;top:281.8px;width:8px;height:8px;background:#2e7d32;border-radius:50%;"></div>
<div class="t" style="top:278.17px;font-size:12.5px;line-height:16px;font-weight:400;color:#1976d2;letter-spacing:-0.1px;left:1137.0px;-webkit-text-stroke:0.15px #1976d2;">30K</div>
<div class="b" style="left:1077.0px;top:296.1px;width:8px;height:8px;background:#2196f3;border-radius:50%;"></div>
<div class="t" style="top:292.47px;font-size:12.5px;line-height:16px;font-weight:400;color:#1976d2;letter-spacing:-0.1px;left:1088.5px;-webkit-text-stroke:0.15px #1976d2;">45K</div>
<div class="b" style="left:1125.5px;top:296.1px;width:8px;height:8px;background:#673ab7;border-radius:50%;"></div>
<div class="t" style="top:292.47px;font-size:12.5px;line-height:16px;font-weight:400;color:#1976d2;letter-spacing:-0.1px;left:1137.0px;-webkit-text-stroke:0.15px #1976d2;">55K</div>
<div class="b" style="left:1178.7px;top:233.2px;width:98.7px;height:77.3px;border:1px solid #92baea;border-radius:6px;box-sizing:border-box;"></div>
<div class="b" style="left:1179.7px;top:275px;width:96.7px;height:1px;background:#9e9e9e;"></div>
<div class="t" style="left:1176.95px;width:99px;top:239.29px;line-height:16px;font-size:13.6px;letter-spacing:-0.2px;color:#1976d2;text-align:center;-webkit-text-stroke:0.15px #1976d2;">Mon 01/12<svg width="14" height="14" viewBox="0 0 24 24" style="display:inline-block;vertical-align:-3px;margin-left:2.5px"><path d="M19 3H5c-1.11 0-2 .9-2 2v14c0 1.1.89 2 2 2h14c1.11 0 2-.9 2-2V5c0-1.1-.89-2-2-2zm-9 14l-5-5 1.41-1.41L10 14.17l7.59-7.59L19 8l-9 9z" fill="#1976d2"/></svg></div>
<div class="t" style="top:254.09px;font-size:13.6px;line-height:17px;font-weight:400;color:#1976d2;letter-spacing:-0.1px;left:1178.7px;width:98px;text-align:center;-webkit-text-stroke:0.15px #1976d2;">Only</div>
<div class="b" style="left:1183.7px;top:281.8px;width:8px;height:8px;background:#4caf50;border-radius:50%;"></div>
<div class="t" style="top:278.17px;font-size:12.5px;line-height:16px;font-weight:400;color:#1976d2;letter-spacing:-0.1px;left:1195.2px;-webkit-text-stroke:0.15px #1976d2;">18K</div>
<div class="b" style="left:1232.2px;top:281.8px;width:8px;height:8px;background:#2e7d32;border-radius:50%;"></div>
<div class="t" style="top:278.17px;font-size:12.5px;line-height:16px;font-weight:400;color:#1976d2;letter-spacing:-0.1px;left:1243.7px;-webkit-text-stroke:0.15px #1976d2;">30K</div>
<div class="b" style="left:1183.7px;top:296.1px;width:8px;height:8px;background:#2196f3;border-radius:50%;"></div>
<div class="t" style="top:292.47px;font-size:12.5px;line-height:16px;font-weight:400;color:#1976d2;letter-spacing:-0.1px;left:1195.2px;-webkit-text-stroke:0.15px #1976d2;">45K</div>
<div class="b" style="left:1232.2px;top:296.1px;width:8px;height:8px;background:#673ab7;border-radius:50%;"></div>
<div class="t" style="top:292.47px;font-size:12.5px;line-height:16px;font-weight:400;color:#1976d2;letter-spacing:-0.1px;left:1243.7px;-webkit-text-stroke:0.15px #1976d2;">55K</div>
</div>
<div class="t" style="top:326.70px;font-size:15.3px;line-height:19px;font-weight:400;color:#212121;left:4.5px;">9,953 flights</div>
<div class="b" style="left:97px;top:322px;width:88.5px;height:30.5px;border:1px solid #dcdcdc;border-radius:4px;box-sizing:border-box;overflow:hidden;"></div>
<div class="b" style="left:156.5px;top:323px;width:28px;height:28.5px;background:#ebebeb;border-radius:0 3px 3px 0;"></div>
<div class="b" style="left:127.3px;top:323px;width:1px;height:28.5px;background:#e0e0e0;"></div>
<div class="b" style="left:156px;top:323px;width:1px;height:28.5px;background:#d6d6d6;"></div>
<svg class="i" style="left:103.5px;top:329.5px;" width="17.5" height="15.5" viewBox="0 0 17.5 15.5"><rect x="0" y="0" width="17.5" height="4" rx="2" fill="#1976d2"/><rect x="0" y="5.75" width="17.5" height="4" rx="2" fill="#1976d2"/><rect x="0" y="11.5" width="17.5" height="4" rx="2" fill="#1976d2"/></svg>
<svg class="i" style="left:133.8px;top:330.5px;" width="15.5" height="14" viewBox="0 0 15.5 14"><rect x="0" y="0" width="15.5" height="1.6" fill="#1976d2"/><rect x="0" y="4.1" width="15.5" height="1.6" fill="#1976d2"/><rect x="0" y="8.2" width="15.5" height="1.6" fill="#1976d2"/><rect x="0" y="12.3" width="15.5" height="1.6" fill="#1976d2"/></svg>
<svg class="i" style="left:161.2px;top:329.7px;" width="19" height="15.2" viewBox="0 0 19 15.2"><rect x="1" y="1" width="17" height="13.2" rx="1.8" fill="none" stroke="#111" stroke-width="2"/><path d="M6.7 1V14.2M12.3 1V14.2" stroke="#111" stroke-width="2"/></svg>
<div class="b" style="left:198.5px;top:325px;width:165px;height:24px;background:#fff;border-radius:4px;box-shadow:0 1px 4px rgba(0,0,0,.28);"></div>
<div class="b" style="left:194px;top:331.5px;width:11px;height:11px;background:#fff;transform:rotate(45deg);box-shadow:-1px 1px 2px rgba(0,0,0,.07);"></div>
<div class="b" style="left:199px;top:327px;width:12px;height:20px;background:#fff;"></div>
<div class="t" style="top:328.12px;font-size:13.5px;line-height:17px;font-weight:700;color:#1976d2;letter-spacing:0.1px;left:213px;">try different views!</div>
<svg class="i" style="left:338.5px;top:329px;" width="15.5" height="15.5" viewBox="0 0 24 24"><path d="M19 6.41L17.59 5 12 10.59 6.41 5 5 6.41 10.59 12 5 17.59 6.41 19 12 13.41 17.59 19 19 17.59 13.41 12z" fill="#333"/></svg>
<svg class="i" style="left:500px;top:325.8px;stroke:#1976d2;stroke-width:0.5;" width="18.5" height="18.5" viewBox="0 0 24 24"><path d="M22 9.24l-7.19-.62L12 2 9.19 8.63 2 9.24l5.46 4.73L5.82 21 12 17.27 18.18 21l-1.63-7.03L22 9.24zM12 15.4l-3.76 2.27 1-4.28-3.32-2.88 4.38-.38L12 6.1l1.71 4.04 4.38.38-3.32 2.88 1 4.28L12 15.4z" fill="#1976d2"/></svg>
<div class="t" style="top:327.20px;font-size:15.3px;line-height:19px;font-weight:700;color:#1976d2;left:519px;">Check Yearly Availability</div>
<svg class="i" style="left:751px;top:329px;" width="17.5" height="17.5" viewBox="0 0 24 24"><path d="M12 2C6.48 2 2 6.48 2 12s4.48 10 10 10 10-4.48 10-10S17.52 2 12 2zm0 18c-4.41 0-8-3.59-8-8s3.59-8 8-8 8 3.59 8 8-3.59 8-8 8zm.31-8.86c-1.77-.45-2.34-.94-2.34-1.67 0-.84.79-1.43 2.1-1.43 1.38 0 1.9.66 1.94 1.64h1.71c-.05-1.34-.87-2.57-2.49-2.97V5H10.9v1.69c-1.51.32-2.72 1.3-2.72 2.81 0 1.79 1.49 2.69 3.66 3.21 1.95.46 2.34 1.15 2.34 1.87 0 .53-.39 1.39-2.1 1.39-1.6 0-2.23-.72-2.32-1.64H8.04c.1 1.7 1.36 2.66 2.86 2.97V19h2.340v-1.67c1.52-.29 2.72-1.16 2.73-2.77-.01-2.2-1.9-2.96-3.66-3.42z" fill="#1976d2"/></svg>
<div class="t" style="top:328.05px;font-size:14.3px;line-height:18px;font-weight:700;color:#1976d2;letter-spacing:0.05px;left:769px;">Save $334 - $2,358</div>
<div class="b" style="left:910px;top:322px;width:89px;height:30px;background:#1976d2;border-radius:15px;"></div>
<svg class="i" style="left:923.5px;top:330.5px;" width="15" height="13" viewBox="0 0 15 13"><path d="M7 1.2L2 6.5L7 11.8M13 1.2L8 6.5L13 11.8" fill="none" stroke="#fff" stroke-width="1.85" stroke-linejoin="miter"/></svg>
<div class="t" style="top:328.00px;font-size:13px;line-height:16px;font-weight:700;color:#fff;left:941.5px;">32 days</div>
<div class="b" style="left:1004.5px;top:322.3px;width:89px;height:30px;background:#1976d2;border-radius:15px;"></div>
<div class="t" style="top:328.00px;font-size:13px;line-height:16px;font-weight:700;color:#fff;left:1013.5px;">32 days</div>
<svg class="i" style="left:1064.5px;top:331px;" width="15" height="13" viewBox="0 0 15 13"><path d="M2 1.2L7 6.5L2 11.8M8 1.2L13 6.5L8 11.8" fill="none" stroke="#fff" stroke-width="1.85" stroke-linejoin="miter"/></svg>
<div class="t" style="top:327.33px;font-size:15.8px;line-height:20px;font-weight:400;color:#1976d2;left:1109px;-webkit-text-stroke:0.2px #1976d2;">Sort by:</div>
<svg class="i" style="left:1166px;top:326px;" width="18" height="22" viewBox="0 0 18 22"><path d="M6.5 11.6V3.2M2.6 7.1L6.5 3.2L10.4 7.1" fill="none" stroke="#1976d2" stroke-width="1.9" stroke-linecap="round" stroke-linejoin="round"/><path d="M12.3 10.6V19.2M8.4 15.3L12.3 19.2L16.2 15.3" fill="none" stroke="#1976d2" stroke-width="1.9" stroke-linecap="round" stroke-linejoin="round"/></svg>
<div class="t" style="top:373.65px;font-size:14px;line-height:18px;font-weight:700;color:#1976d2;left:464.5px;width:120px;text-align:center;">transfer</div>
<div class="b" style="left:584px;top:366px;width:143.5px;height:56px;background:#fff;box-shadow:0 1px 3px rgba(0,0,0,.18), 0 0 1px rgba(0,0,0,.12);"></div>
<div class="b" style="left:584px;top:417px;width:143.5px;height:5px;background:#4caf50;"></div>
<div class="t" style="top:373.72px;font-size:13.5px;line-height:17px;font-weight:700;color:#43a047;letter-spacing:0.2px;left:585.75px;width:140px;text-align:center;">Economy</div>
<div class="t" style="top:389.32px;font-size:13.5px;line-height:17px;font-weight:700;color:#43a047;letter-spacing:0.2px;left:585.75px;width:140px;text-align:center;">(9,043)</div>
<svg class="i" style="left:713.0px;top:385px;" width="6" height="12" viewBox="0 0 6 12"><path d="M0 4L3 0.8L6 4Z M0 8L3 11.2L6 8Z" fill="#43a047"/></svg>
<div class="b" style="left:727.5px;top:366px;width:143.5px;height:56px;background:#fff;box-shadow:0 1px 3px rgba(0,0,0,.18), 0 0 1px rgba(0,0,0,.12);"></div>
<div class="b" style="left:727.5px;top:417px;width:143.5px;height:5px;background:#2e7d32;"></div>
<div class="t" style="top:373.72px;font-size:13.5px;line-height:17px;font-weight:700;color:#2e7d32;letter-spacing:0.2px;left:729.25px;width:140px;text-align:center;">Prem Econ</div>
<div class="t" style="top:389.32px;font-size:13.5px;line-height:17px;font-weight:700;color:#2e7d32;letter-spacing:0.2px;left:729.25px;width:140px;text-align:center;">(5,007)</div>
<svg class="i" style="left:856.5px;top:385px;" width="6" height="12" viewBox="0 0 6 12"><path d="M0 4L3 0.8L6 4Z M0 8L3 11.2L6 8Z" fill="#2e7d32"/></svg>
<div class="b" style="left:871px;top:366px;width:142.5px;height:56px;background:#fff;box-shadow:0 1px 3px rgba(0,0,0,.18), 0 0 1px rgba(0,0,0,.12);"></div>
<div class="b" style="left:871px;top:417px;width:142.5px;height:5px;background:#1e88e5;"></div>
<div class="t" style="top:373.72px;font-size:13.5px;line-height:17px;font-weight:700;color:#1e88e5;letter-spacing:0.2px;left:872.25px;width:140px;text-align:center;">Business</div>
<div class="t" style="top:389.32px;font-size:13.5px;line-height:17px;font-weight:700;color:#1e88e5;letter-spacing:0.2px;left:872.25px;width:140px;text-align:center;">(6,391)</div>
<svg class="i" style="left:999.0px;top:385px;" width="6" height="12" viewBox="0 0 6 12"><path d="M0.5 4L3 1.3L5.5 4Z" fill="#1e88e5"/></svg>
<div class="b" style="left:1013.5px;top:366px;width:143.5px;height:56px;background:#fff;box-shadow:0 1px 3px rgba(0,0,0,.18), 0 0 1px rgba(0,0,0,.12);"></div>
<div class="b" style="left:1013.5px;top:417px;width:143.5px;height:5px;background:#673ab7;"></div>
<div class="t" style="top:381.62px;font-size:13.5px;line-height:17px;font-weight:700;color:#5e35b1;letter-spacing:0.2px;left:1016.25px;width:140px;text-align:center;">First(759)</div>
<svg class="i" style="left:1142.5px;top:385px;" width="6" height="12" viewBox="0 0 6 12"><path d="M0 4L3 0.8L6 4Z M0 8L3 11.2L6 8Z" fill="#5e35b1"/></svg>
<div class="b" style="left:5.5px;top:431px;width:1189px;height:143px;border:1px solid #d0d0d0;border-radius:12px;box-sizing:border-box;box-shadow:0 2px 2px rgba(0,0,0,.12);background:#fff;"></div>
<div class="b" style="left:465px;top:432px;width:1px;height:141px;background:#e2e2e2;"></div>
<div class="b" style="left:583.5px;top:432px;width:1px;height:141px;background:#e2e2e2;"></div>
<div class="b" style="left:726.5px;top:432px;width:1px;height:141px;background:#e2e2e2;"></div>
<div class="b" style="left:870px;top:432px;width:1px;height:141px;background:#e2e2e2;"></div>
<div class="b" style="left:1012.5px;top:432px;width:1px;height:141px;background:#e2e2e2;"></div>
<div class="b" style="left:1155px;top:432px;width:1px;height:141px;background:#e2e2e2;"></div>
<div class="t" style="top:446.21px;font-size:17px;line-height:21px;font-weight:400;color:#212121;left:17px;">08:05PM</div>
<div class="t" style="top:468.77px;font-size:12.2px;line-height:15px;font-weight:400;color:#212121;left:10.799999999999997px;width:80px;text-align:center;">Sun 02/01</div>
<div class="t" style="top:454.20px;font-size:15.3px;line-height:19px;font-weight:400;color:#212121;left:135.5px;width:200px;text-align:center;">7hr 5min <span style="font-size:11.5px;vertical-align:1px">•</span> Nonstop</div>
<div class="t" style="top:445.51px;font-size:17.3px;line-height:22px;font-weight:400;color:#212121;left:374.8px;width:90px;text-align:center;">08:10AM</div>
<div class="t" style="top:468.74px;font-size:12.3px;line-height:15px;font-weight:400;color:#212121;left:375.0px;width:90px;text-align:center;">Mon 02/02</div>
<div class="t" style="top:493.96px;font-size:18px;line-height:22px;font-weight:400;color:#212121;left:15.5px;width:60px;text-align:center;">JFK</div>
<div class="t" style="top:493.16px;font-size:18px;line-height:22px;font-weight:400;color:#212121;left:394.0px;width:60px;text-align:center;">LHR</div>
<div class="b" style="left:67px;top:503.3px;width:160px;height:1.3px;background:#e6e6e6;"></div>
<div class="b" style="left:242px;top:503.3px;width:159px;height:1.3px;background:#e6e6e6;"></div>
<svg class="i" style="left:226px;top:494px;" width="17" height="17" viewBox="0 0 17 17"><defs><linearGradient id="rg" x1="0" y1="0" x2="1" y2="0"><stop offset="0" stop-color="#e53935" stop-opacity="0.55"/><stop offset="0.5" stop-color="#e02424" stop-opacity="0.95"/><stop offset="1" stop-color="#d81b1b"/></linearGradient></defs><path d="M1.2 3.2 C5 1.6 10.5 1.4 14.8 1.8 C15.3 2.6 15.4 5.6 15 7.4 C11 7.2 6 6.6 2.6 5.6 C1.6 5.2 1 4.2 1.2 3.2Z" fill="url(#rg)"/><path d="M15.1 7.2 C15.4 10 14.5 13.5 13.2 15.6 C12.2 15.6 11.1 14.6 11.4 13.4 C11.8 11.6 13.8 9.6 15.1 7.2Z" fill="#3b5cc4"/></svg>
<div class="t" style="top:517.24px;font-size:12px;line-height:15px;font-weight:400;color:#212121;left:193.5px;width:80px;text-align:center;">7hr 5min</div>
<div class="b" style="left:15px;top:543.5px;width:81.5px;height:19px;border:1px solid #eeeeee;border-radius:5px;box-sizing:border-box;"></div>
<svg class="i" style="left:19.5px;top:546px;" width="14" height="14" viewBox="0 0 24 24"><path d="M12 7c-2.76 0-5 2.24-5 5s2.24 5 5 5 5-2.24 5-5-2.24-5-5-5zm0-5C6.48 2 2 6.48 2 12s4.48 10 10 10 10-4.48 10-10S17.52 2 12 2zm0 18c-4.42 0-8-3.58-8-8s3.58-8 8-8 8 3.58 8 8-3.58 8-8 8z" fill="#1976d2"/></svg>
<div class="t" style="top:545.84px;font-size:12px;line-height:15px;font-weight:400;color:#212121;letter-spacing:-0.2px;left:38.5px;">Real-time</div>
<svg class="i" style="left:104.5px;top:545.5px;" width="14.5" height="14.5" viewBox="0 0 24 24"><path d="M16.59 7.58L10 14.17l-3.59-3.58L5 12l5 5 8-8zM12 2C6.48 2 2 6.48 2 12s4.48 10 10 10 10-4.48 10-10S17.52 2 12 2zm0 18c-4.42 0-8-3.58-8-8s3.58-8 8-8 8 3.58 8 8-3.58 8-8 8z" fill="#757575"/></svg>
<div class="t" style="top:545.09px;font-size:13.6px;line-height:17px;font-weight:400;color:#1f78d4;letter-spacing:0.5px;left:344.0px;width:120px;text-align:center;-webkit-text-stroke:0.15px #1f78d4;">Live seat map</div>
<div class="b" style="left:478px;top:458.3px;width:94px;height:37.5px;background:#ebebeb;border-radius:6px;"></div>
<div class="b" style="left:511.8px;top:464px;width:26.3px;height:26.2px;background:#000;"></div>
<svg class="i" style="left:518.5px;top:470.5px;" width="13" height="13.5" viewBox="0 0 13 13.5"><rect x="0.7" y="0.7" width="11.6" height="12.1" rx="1.4" fill="none" stroke="#7fa3c8" stroke-width="1.25"/><path d="M0.7 4.7H12.3M0.7 8.8H12.3M4.1 0.7V4.7M8.1 4.7V8.8M4.7 8.8V12.8" stroke="#7fa3c8" stroke-width="1.2"/></svg>
<svg class="i" style="left:520.5px;top:499.5px;" width="9" height="9" viewBox="0 0 9 9"><path d="M4.5 0.5V8M1.2 4.8L4.5 8L7.8 4.8" fill="none" stroke="#777" stroke-width="1"/></svg>
<div class="b" style="left:478px;top:512.5px;width:94px;height:33px;background:#ebebeb;border-radius:6px;"></div>
<div class="t" style="top:514.21px;font-size:17px;line-height:21px;font-weight:400;color:#2a3848;letter-spacing:1.35px;left:478.0px;width:94px;text-align:center;text-indent:1.35px;">ATMOS</div>
<div class="t" style="top:533.63px;font-size:8px;line-height:10px;font-weight:400;color:#3a4654;letter-spacing:1.85px;left:478.79999999999995px;width:94px;text-align:center;text-indent:1.85px;-webkit-text-stroke:0.2px #3a4654;">REWARDS</div>
<div class="t" style="top:447.97px;font-size:12.5px;line-height:16px;font-weight:400;color:#212121;left:585.5px;width:140px;text-align:center;">9+ Seats Left</div>
<div class="t" style="top:467.73px;font-size:23px;line-height:29px;font-weight:400;color:#212121;left:585.5px;width:140px;text-align:center;">22.5 K</div>
<div class="t" style="top:495.60px;font-size:15px;line-height:19px;font-weight:400;color:#212121;left:585.5px;width:140px;text-align:center;">+ $336</div>
<svg class="i" style="left:618.5px;top:547px;" width="13.8" height="13.8" viewBox="0 0 24 24"><path d="M12 2C6.48 2 2 6.48 2 12s4.48 10 10 10 10-4.48 10-10S17.52 2 12 2zm0 18c-4.41 0-8-3.59-8-8s3.59-8 8-8 8 3.59 8 8-3.59 8-8 8zm.31-8.86c-1.77-.45-2.34-.94-2.34-1.67 0-.84.79-1.43 2.1-1.43 1.38 0 1.9.66 1.94 1.64h1.71c-.05-1.34-.87-2.57-2.49-2.97V5H10.9v1.69c-1.51.32-2.72 1.3-2.72 2.81 0 1.79 1.49 2.69 3.66 3.21 1.95.46 2.34 1.15 2.34 1.87 0 .53-.39 1.39-2.1 1.39-1.6 0-2.23-.72-2.32-1.64H8.04c.1 1.7 1.36 2.66 2.86 2.97V19h2.340v-1.67c1.52-.29 2.72-1.16 2.73-2.77-.01-2.2-1.9-2.96-3.66-3.42z" fill="#3b86d9"/></svg>
<div class="t" style="top:545.87px;font-size:12.5px;line-height:16px;font-weight:400;color:#7b7b7b;left:634px;">Cash $334</div>
<div class="t" style="top:456.37px;font-size:12.5px;line-height:16px;font-weight:400;color:#212121;left:728.5px;width:140px;text-align:center;">6+ Seats Left</div>
<div class="t" style="top:475.93px;font-size:23px;line-height:29px;font-weight:400;color:#212121;left:728.5px;width:140px;text-align:center;">30 K</div>
<div class="t" style="top:503.80px;font-size:15px;line-height:19px;font-weight:400;color:#212121;left:728.5px;width:140px;text-align:center;">+ $291</div>
<div class="t" style="top:529.07px;font-size:12.5px;line-height:16px;font-weight:400;color:#212121;left:728.5px;width:140px;text-align:center;">100% Premium</div>
<div class="b" style="left:760.5px;top:549.5px;width:76px;height:2px;background:#2e7d32;"></div>
<div class="t" style="top:445.57px;font-size:12.5px;line-height:16px;font-weight:400;color:#212121;left:871.5px;width:140px;text-align:center;">9+ Seats Left</div>
<div class="t" style="top:465.83px;font-size:23px;line-height:29px;font-weight:400;color:#212121;left:871.5px;width:140px;text-align:center;">45 K</div>
<div class="t" style="top:493.70px;font-size:15px;line-height:19px;font-weight:400;color:#212121;left:871.5px;width:140px;text-align:center;">+ $996</div>
<div class="t" style="top:518.87px;font-size:12.5px;line-height:16px;font-weight:400;color:#212121;left:871.5px;width:140px;text-align:center;">100% Premium</div>
<div class="b" style="left:901px;top:539.3px;width:79.5px;height:3px;background:#1e88e5;border-radius:2px;"></div>
<svg class="i" style="left:899px;top:547.5px;" width="13.8" height="13.8" viewBox="0 0 24 24"><path d="M12 2C6.48 2 2 6.48 2 12s4.48 10 10 10 10-4.48 10-10S17.52 2 12 2zm0 18c-4.41 0-8-3.59-8-8s3.59-8 8-8 8 3.59 8 8-3.59 8-8 8zm.31-8.86c-1.77-.45-2.34-.94-2.34-1.67 0-.84.79-1.43 2.1-1.43 1.38 0 1.9.66 1.94 1.64h1.71c-.05-1.34-.87-2.57-2.49-2.97V5H10.9v1.69c-1.51.32-2.72 1.3-2.72 2.81 0 1.79 1.49 2.69 3.66 3.21 1.95.46 2.34 1.15 2.34 1.87 0 .53-.39 1.39-2.1 1.39-1.6 0-2.23-.72-2.32-1.64H8.04c.1 1.7 1.36 2.66 2.86 2.97V19h2.340v-1.67c1.52-.29 2.72-1.16 2.73-2.77-.01-2.2-1.9-2.96-3.66-3.42z" fill="#3b86d9"/></svg>
<div class="t" style="top:546.57px;font-size:12.5px;line-height:16px;font-weight:400;color:#7b7b7b;left:914px;">Cash $2,358</div>
<div class="t" style="top:493.46px;font-size:16px;line-height:20px;font-weight:400;color:#212121;left:1064.0px;width:40px;text-align:center;">-</div>
<svg class="i" style="left:1163px;top:469px;" width="23" height="23" viewBox="0 0 24 24"><path d="M11 7h2v2h-2zm0 4h2v6h-2zm1-9C6.48 2 2 6.48 2 12s4.48 10 10 10 10-4.48 10-10S17.52 2 12 2zm0 18c-4.41 0-8-3.59-8-8s3.59-8 8-8 8 3.59 8 8-3.59 8-8 8z" fill="#616161"/></svg>
<svg class="i" style="left:1163px;top:506px;" width="23" height="23" viewBox="0 0 24 24"><path d="M16.59 8.59L12 13.17 7.41 8.59 6 10l6 6 6-6z" fill="#616161"/></svg>
<script>
// place checkboxes after date header text
</script>
</body></html>
